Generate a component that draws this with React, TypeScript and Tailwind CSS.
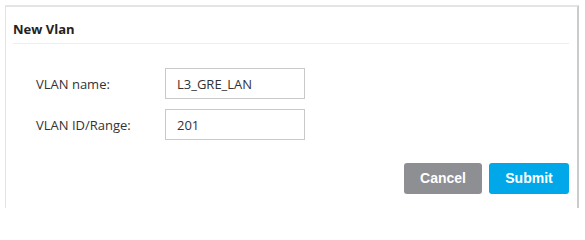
import React from "react";

export default function App() {
  return (
    <div className="w-[585px] h-[208px] bg-white pt-[5px] pl-[5px] pr-[6px] overflow-hidden" style={{ fontFamily: '"Open Sans", sans-serif' }}>
      <div className="h-[210px] border-t-2 border-t-[#e4e4e4] border-l border-l-[#e2e2e2] border-r-2 border-r-[#cbcbcb] pl-[7px] pr-[8px]">
        <div className="pt-[13px] pb-[5px] border-b border-b-[#eeeeee]">
          <div className="text-[13px] leading-[18px] font-bold text-[#222222]">New Vlan</div>
        </div>
        <div className="mt-[24px] pl-[23px] flex flex-col gap-[10px]">
          <div className="flex items-center">
            <label className="w-[129px] text-[13px] leading-[18px] text-[#333333]">VLAN name:</label>
            <input
              readOnly
              value="L3_GRE_LAN"
              className="w-[140px] h-[31px] border border-[#c9c9c9] px-[11px] text-[13px] text-[#333333] outline-none bg-white"
              style={{ fontFamily: '"Open Sans", sans-serif' }}
            />
          </div>
          <div className="flex items-center">
            <label className="w-[129px] text-[13px] leading-[18px] text-[#333333]">VLAN ID/Range:</label>
            <input
              readOnly
              value="201"
              className="w-[140px] h-[31px] border border-[#c9c9c9] px-[11px] text-[13px] text-[#333333] outline-none bg-white"
              style={{ fontFamily: '"Open Sans", sans-serif' }}
            />
          </div>
        </div>
        <div className="mt-[23px] flex justify-end gap-[7px]">
          <button className="w-[78px] h-[31px] rounded-[3px] bg-[#8e8f93] text-white text-[14px] font-bold" style={{ fontFamily: '"Liberation Sans", Arial, sans-serif' }}>
            Cancel
          </button>
          <button className="w-[80px] h-[31px] rounded-[3px] bg-[#00a8ea] text-white text-[14px] font-bold" style={{ fontFamily: '"Liberation Sans", Arial, sans-serif' }}>
            Submit
          </button>
        </div>
      </div>
    </div>
  );
}
